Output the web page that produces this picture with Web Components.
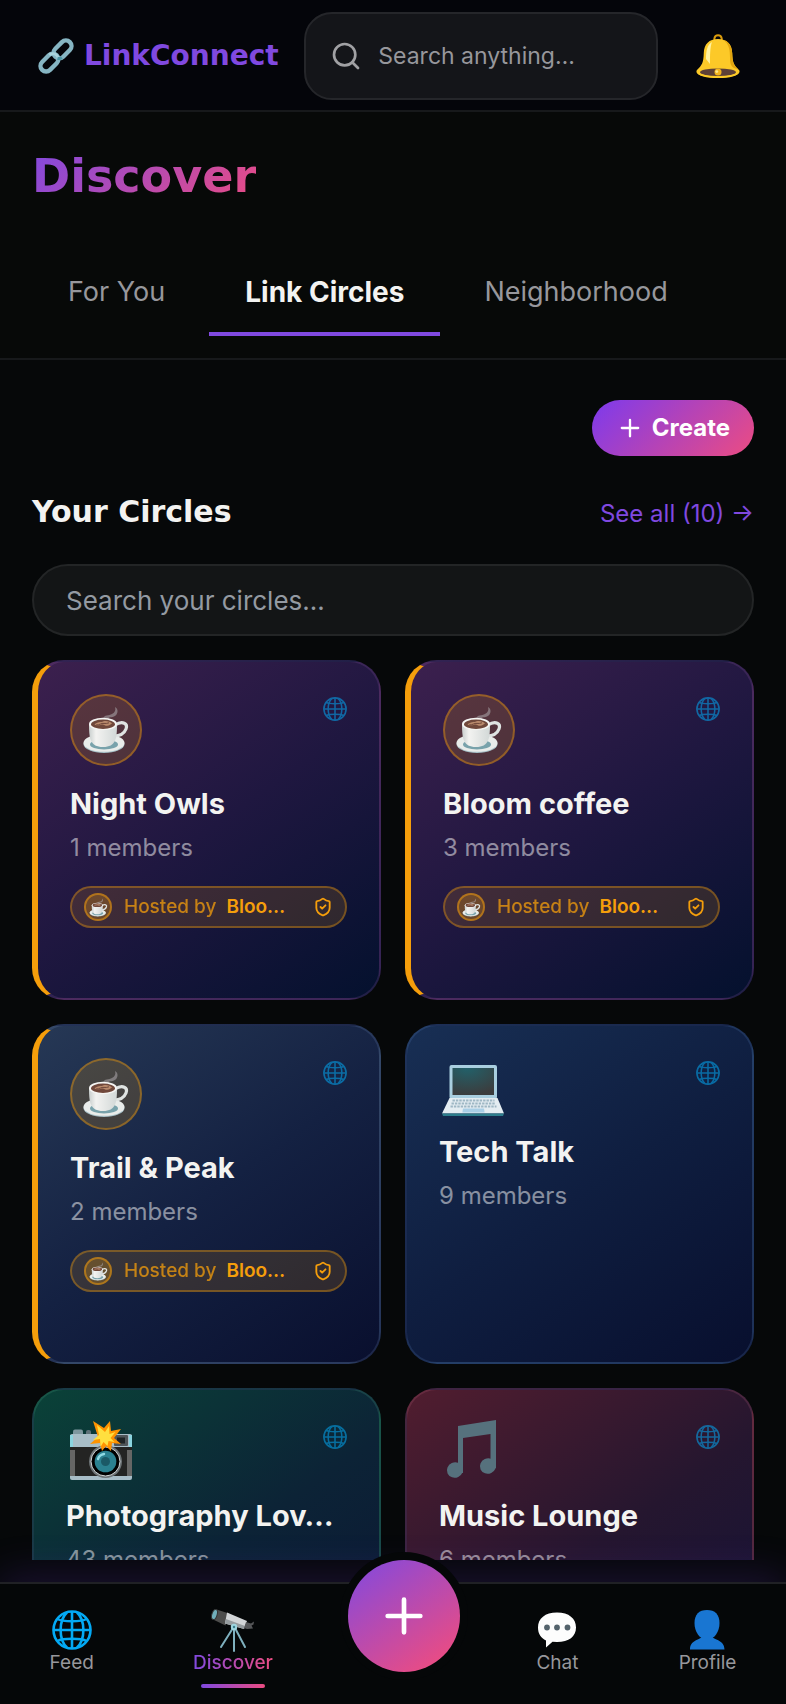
<!DOCTYPE html>
<html lang="en">
<head>
<meta charset="utf-8">
<meta name="viewport" content="width=device-width, initial-scale=1">
<title>LinkConnect - Discover</title>
<style>
  :root {
    --bg: #060809;
    --nav-bg: #050708;
    --line: #17191b;
    --violet: #8049e0;
    --pink: #ec4c82;
    --amber: #f59e0b;
    --text: #f3f3f1;
    --muted: #97979c;
    --display: "DejaVu Sans", sans-serif;
    --grad: linear-gradient(135deg, #7c3aed, #ec4c82);
  }
  html, body { height: 100%; }
  body {
    margin: 0;
    background: var(--bg);
    color: var(--text);
    font-family: "Inter", "Liberation Sans", sans-serif;
  }
</style>
</head>
<body>
<link-app></link-app>

<script>
// ---------- icons ----------
const ICONS = {
  link: ['0 0 36 36', `
    <g fill="none" stroke-width="4.4" transform="rotate(-45 18 18)">
      <rect x="-1.6" y="12.4" width="20.6" height="11.2" rx="5.6" stroke="#86b5c3"/>
      <rect x="17" y="12.4" width="20.6" height="11.2" rx="5.6" stroke="#86b5c3"/>
      <path d="M14 12.4a5.6 5.6 0 0 1 5 5.6 5.6 5.6 0 0 1-2 4.4" stroke="#a9d3dc" stroke-width="3"/>
      <path d="M17.4 20.6a5.6 5.6 0 0 0 3.6 2.8" stroke="#4d96a6" stroke-width="3"/>
    </g>`],
  search: ['0 0 24 24', `<g fill="none" stroke="#a1a1a4" stroke-width="2" stroke-linecap="round"><circle cx="11" cy="11" r="8"/><path d="m21 21-4.3-4.3"/></g>`],
  bell: ['0 0 44 44', `
    <path d="M18.4 6.6V4.4a3.7 3.7 0 0 1 7.3 0v2.2" fill="none" stroke="#d99a0c" stroke-width="2"/>
    <path d="M22 5C13 5 8.2 10 7.8 19 7.4 29 6 31 1 36c-2 2.600 1 7.500 21 7.500S45 38.600 43 36c-5-5-6.400-7-6.800-17C35.800 10 31 5 22 5z" fill="#fcc928"/>
    <path d="M27 6c6 3 7 10 7 18 0 6 1 8 4 10l4.500 1.500C37 31 36.600 28 36.200 19 35.800 11 32 7 27 6z" fill="#e2a50f"/>
    <path d="M16 8c-5 3-6 9-6 17l4 5c0-8 0-17 2-22z" fill="#fff2a0"/>
    <ellipse cx="22" cy="38.300" rx="18" ry="3.800" fill="#5d4037"/>
    <circle cx="22" cy="38" r="3.500" fill="#f3b31c"/><circle cx="20.800" cy="37.600" r="1.400" fill="#ffe88a"/>
    <path d="M1.500 38c3 7 38 7 41 0" fill="none" stroke="#fcc928" stroke-width="1.600"/>`],
  plus: ['0 0 24 24', `<path d="M12 5v14M5 12h14" fill="none" stroke="currentColor" stroke-width="2" stroke-linecap="round"/>`],
  globe: ['0 0 40 40', `
    <g fill="none" stroke="#03a9f4" stroke-width="2.600">
      <circle cx="20" cy="20" r="18.500"/><path d="M20 1v38M1 20h38"/>
      <path d="M15 2.500C6.500 10 6.500 30 15 37.500M25 2.500C33.500 10 33.500 30 25 37.500"/>
      <path d="M5.500 9c5 3 24 3 29 0M5.500 31c5-3 24-3 29 0"/>
    </g>`],
  coffee: ['0 0 48 48', `
    <defs><linearGradient id="cup"><stop offset="0" stop-color="#c9cfce"/><stop offset=".25" stop-color="#f3f3f1"/><stop offset="1" stop-color="#d2d8d7"/></linearGradient></defs>
    <path d="M21 13c1-5 6-3 9-5 3-1.500 4-4 3-7 4 2 3 8-1 9.500-4 1.500-6 0-6 4z" fill="#a6a2a5" opacity=".6"/>
    <ellipse cx="22" cy="38" rx="20.500" ry="9" fill="#a5bfc6"/>
    <ellipse cx="22" cy="37" rx="20.500" ry="8.800" fill="#e9ecea"/>
    <ellipse cx="22" cy="38.500" rx="14" ry="5" fill="#78a2ab"/>
    <path d="M33 19c8-5 13-1 11 4s-7 7-12 7" fill="none" stroke="#dfe3e2" stroke-width="3.200"/>
    <path d="M7 18c0 14 1 23 14 23s14-9 14-23z" fill="url(#cup)"/>
    <ellipse cx="21" cy="18" rx="14" ry="6.200" fill="#f5f5f3"/>
    <ellipse cx="21" cy="18.200" rx="12" ry="4.700" fill="#70483b"/>
    <path d="M12.500 18.500c3-3 6-2 9-3.300 3-.8 7 .3 8.500 2.300-2 1-3 2.800-6 2.200-2-.4-2-2-5-1-2.500.8-4 1-6.500-.2z" fill="#b98a6c"/>
    <path d="M14 19c4 0 5-2 8-1.600 2 .3 3 0 5-.6" fill="none" stroke="#70483b" stroke-width="1"/>`],
  shield: ['0 0 24 24', `<g fill="none" stroke="#f59e0b" stroke-width="2.200" stroke-linecap="round" stroke-linejoin="round"><path d="M20 13c0 5-3.500 7.500-7.660 8.950a1 1 0 0 1-.67-.01C7.500 20.500 4 18 4 13V6a1 1 0 0 1 1-1c2 0 4.500-1.200 6.240-2.720a1.170 1.170 0 0 1 1.520 0C14.510 3.810 17 5 19 5a1 1 0 0 1 1 1z"/><path d="m9 12 2 2 4-4"/></g>`],
  laptop: ['0 0 70 64', `
    <defs><radialGradient id="scr" cx=".35" cy="0" r="1"><stop offset="0" stop-color="#22616a"/><stop offset="1" stop-color="#3b3d3e"/></radialGradient></defs>
    <rect x="10.500" y="7" width="47.500" height="34" rx="2" fill="#a9cfe0"/>
    <rect x="13.500" y="10" width="41.500" height="27" fill="url(#scr)"/>
    <path d="M10.500 40h48L65 55.500H3z" fill="#e4edf2"/>
    <path d="M3 55.500h62L64 58H4z" fill="#2d7d8c"/>
    <path d="M13.500 42.500h42M12.500 45.500h44M11.500 48.500h46" stroke="#9eb7c4" stroke-width="2" stroke-dasharray="2.400 1"/>
    <path d="M24 50.500h21l.6 4H23.400z" fill="#a9cfe6"/>`],
  camera: ['0 0 70 64', `
    <rect x="7" y="7.500" width="10" height="8" rx="2" fill="#7e979f"/><rect x="20" y="8" width="5" height="6" rx="2" fill="#5f727a"/>
    <rect x="4" y="12" width="62" height="46" rx="2" fill="#a8bdc7"/>
    <path d="M4 13h3v12H4zM63 13h3v12h-3z" fill="#8bd4df"/>
    <rect x="4" y="25" width="62" height="29" fill="#242423"/>
    <path d="M4 28h5v26H4zM61 28h5v26h-5z" fill="#666665"/>
    <rect x="48" y="13" width="14" height="11" rx="1" fill="#50565a"/><rect x="51" y="15.500" width="8" height="6" fill="#1f2426"/>
    <circle cx="39.500" cy="39.500" r="16.500" fill="#6d7376"/><circle cx="39.500" cy="39.500" r="14.500" fill="#000" stroke="#d5dadc" stroke-width="1"/>
    <circle cx="39.500" cy="39.500" r="10.800" fill="#2b8190"/><circle cx="39.500" cy="39.500" r="4.500" fill="#1b5966"/>
    <path d="M32 37c1-3 3-4.500 6-5" fill="none" stroke="#8fdae4" stroke-width="2.400" stroke-linecap="round"/>
    <path d="m27-1 11 7 6-7 1 10 10-2-7 9 7 6-9-1-1 8-5-5-4 5-2-8-10 1 8-7z" fill="#ff9300"/>
    <path d="m31 3 8 7 4-6 .5 8 6-2-5 6 4 4-6-1-1 5-4-4-3 5-.5-8-7 1 6-5z" fill="#ffdf3f"/>`],
  music: ['0 0 70 64', `
    <path d="M19 4 57-2V46H51.500V12L24 16V51H19z" fill="#56717d"/>
    <ellipse cx="16" cy="48" rx="8.200" ry="7.600" transform="rotate(-25 16 48)" fill="#56717d"/>
    <ellipse cx="49" cy="44" rx="8.200" ry="7.600" transform="rotate(-25 49 44)" fill="#56717d"/>`],
  telescope: ['0 0 44 44', `
    <g stroke="#7fb0be" stroke-width="2" stroke-linecap="round"><path d="M22 20 10 39M23 20v23M24 20l10 19"/></g>
    <path d="m4 1 14 4.500-3.500 12L1 11z" fill="#4d4d4c"/>
    <path d="m16 4.500 20 8.500-3 8-19-5.500z" fill="#d2d5d7"/>
    <path d="m15 11 19 7-1 3-19-5.500z" fill="#969c9f"/>
    <path d="m35 14 5 1.500 3-2-.5 3-2 1 1.500 3-6 .5-3-1z" fill="#555658"/>
    <ellipse cx="3.500" cy="6.500" rx="2.600" ry="5.200" transform="rotate(18 3.500 6.500)" fill="#70aeba" stroke="#333" stroke-width="1"/>
    <circle cx="23" cy="19" r="3.200" fill="#9fd5df"/><circle cx="23" cy="19" r="1.200" fill="#397f8d"/>`],
  chat: ['0 0 44 44', `
    <path d="M22 4.500c12 0 19 6 19 15s-7 14.500-19 14.500l-4.500-.3L11 39.500V32.500C6 30 3 26 3 19.500 3 10.500 10 4.500 22 4.500z" fill="#fdfdfd"/>
    <g fill="#54636c"><circle cx="12" cy="19.500" r="2.900"/><circle cx="22" cy="19.500" r="2.900"/><circle cx="32.500" cy="19.500" r="2.900"/></g>`],
  person: ['0 0 44 44', `
    <path d="M22 2c8 0 12.500 4.500 12.500 13S30 31 22 32C14 31 9.500 23.500 9.500 15S14 2 22 2z" fill="#1976d2"/>
    <path d="M17 28c0 4-12 3-12 13.500h34.500C39.500 31 27 32 27 28z" fill="#1976d2"/>`]
};

class LinkIcon extends HTMLElement {
  connectedCallback() {
    const [box, body] = ICONS[this.getAttribute('name')];
    this.attachShadow({ mode: 'open' }).innerHTML = `
      <style>
        :host { display: block; flex: none; }
        svg { display: block; width: 100%; height: 100%; overflow: visible; }
      </style>
      <svg viewBox="${box}" aria-hidden="true">${body}</svg>
    `;
  }
}
customElements.define('link-icon', LinkIcon);

// ---------- top bar ----------
class LinkHeader extends HTMLElement {
  connectedCallback() {
    this.attachShadow({ mode: 'open' }).innerHTML = `
      <style>
        :host { display: block; flex: none; }
        header {
          display: flex;
          align-items: center;
          padding: 12px 24px 10px 38px;
          background: #04050a;
          border-bottom: 2px solid var(--line);
        }
        .logo {
          flex: 1;
          display: flex;
          align-items: center;
          gap: 10px;
          color: var(--violet);
          font: bold 28px/32px var(--display);
          text-decoration: none;
        }
        .logo link-icon { width: 36px; height: 36px; }
        .search {
          box-sizing: border-box;
          width: 45vw;
          height: 88px;
          display: flex;
          align-items: center;
          gap: 16px;
          padding: 0 24px;
          border: 2px solid #25262a;
          border-radius: 28px;
          background: #141519;
        }
        .search link-icon { width: 32px; height: 32px; }
        input {
          flex: 1;
          min-width: 0;
          padding: 0;
          border: 0;
          outline: 0;
          background: none;
          color: var(--text);
          font: 23px/32px "Inter", sans-serif;
        }
        input::placeholder { color: var(--muted); opacity: 1; }
        button {
          width: 88px;
          height: 88px;
          margin-left: 16px;
          padding: 0;
          border: 0;
          background: none;
          display: grid;
          place-items: center;
        }
        button link-icon { width: 44px; height: 44px; }
      </style>
      <header>
        <a class="logo" href="#home"><link-icon name="link"></link-icon>LinkConnect</a>
        <label class="search">
          <link-icon name="search"></link-icon>
          <input type="text" placeholder="Search anything…" aria-label="Search anything">
        </label>
        <button type="button" aria-label="Notifications"><link-icon name="bell"></link-icon></button>
      </header>
    `;
  }
}
customElements.define('link-header', LinkHeader);

// ---------- page title + tabs ----------
class DiscoverTabs extends HTMLElement {
  connectedCallback() {
    this.attachShadow({ mode: 'open' }).innerHTML = `
      <style>
        :host {
          display: block;
          flex: none;
          padding: 32px 32px 22px;
          background: #070908;
          border-bottom: 2px solid var(--line);
        }
        h1 {
          width: fit-content;
          margin: 0 0 40px;
          font: bold 46px/64px var(--display);
          background: linear-gradient(135deg, var(--violet), var(--pink));
          -webkit-background-clip: text;
          background-clip: text;
          color: transparent;
        }
        .tabs { display: flex; gap: 8px; }
        button {
          height: 88px;
          padding: 4px 36px 0;
          border: 0;
          border-bottom: 4px solid transparent;
          background: none;
          color: var(--muted);
          font: 400 27px/32px "Inter", sans-serif;
          white-space: nowrap;
        }
        button[aria-selected="true"] {
          color: var(--text);
          font-size: 28px;
          font-weight: 700;
          border-bottom-color: var(--violet);
        }
      </style>
      <h1>Discover</h1>
      <div class="tabs" role="tablist">
        <button type="button" role="tab" aria-selected="false">For You</button>
        <button type="button" role="tab" aria-selected="true">Link Circles</button>
        <button type="button" role="tab" aria-selected="false">Neighborhood</button>
      </div>
    `;
    const tabs = this.shadowRoot.querySelectorAll('button');
    tabs.forEach(tab => {
      tab.addEventListener('click', () => {
        tabs.forEach(t => t.setAttribute('aria-selected', t === tab));
      });
    });
  }
}
customElements.define('discover-tabs', DiscoverTabs);

// ---------- one circle ----------
class CircleCard extends HTMLElement {
  connectedCallback() {
    const hosted = this.hasAttribute('host-name');
    const icon = this.getAttribute('icon');
    this.attachShadow({ mode: 'open' }).innerHTML = `
      <style>
        :host {
          box-sizing: border-box;
          display: block;
          min-width: 0;
          padding: 32px;
          position: relative;
          border: 2px solid var(--edge);
          border-radius: 32px;
          background: linear-gradient(145deg, var(--from), var(--mid) 50%, var(--to));
        }
        :host([host-name]) { border-left: 6px solid var(--amber); }
        .avatar {
          box-sizing: border-box;
          width: 72px;
          height: 72px;
          margin-bottom: 20px;
          display: grid;
          place-items: center;
          border: 2px solid rgba(245, 158, 11, .4);
          border-radius: 50%;
          background: rgba(245, 158, 11, .18);
        }
        .avatar link-icon { width: 48px; height: 48px; }
        .emoji { width: 70px; height: 64px; margin-bottom: 12px; }
        /* sits in the corner, over the body */
        .public { position: absolute; top: 35px; right: 32px; width: 24px; height: 24px; opacity: .55; }
        h3 {
          margin: 0 0 10px;
          font-size: 29px;
          line-height: 36px;
          font-weight: 700;
          white-space: nowrap;
        }
        p { margin: 0 0 22px; color: rgba(255, 255, 255, .5); font-size: 24px; line-height: 32px; }
        .host {
          box-sizing: border-box;
          height: 42px;
          display: flex;
          align-items: center;
          padding: 0 12px;
          border: 2px solid rgba(245, 158, 11, .36);
          border-radius: 21px;
          background: rgba(245, 158, 11, .15);
          color: var(--amber);
          font-size: 19px;
          line-height: 24px;
          font-weight: 600;
          white-space: nowrap;
        }
        .dot {
          box-sizing: border-box;
          width: 28px;
          height: 28px;
          margin-right: 12px;
          display: grid;
          place-items: center;
          border: 2px solid rgba(245, 158, 11, .5);
          border-radius: 50%;
          background: rgba(245, 158, 11, .25);
        }
        .dot link-icon { width: 19px; height: 19px; }
        .by { margin-right: 10px; font-weight: 500; opacity: .75; }
        .check { width: 20px; height: 20px; margin-left: auto; }
      </style>
      ${hosted
        ? `<div class="avatar"><link-icon name="${icon}"></link-icon></div>`
        : `<link-icon class="emoji" name="${icon}"></link-icon>`}
      <h3><slot></slot></h3>
      <p>${this.getAttribute('members')} members</p>
      ${hosted ? `
      <div class="host">
        <span class="dot"><link-icon name="${icon}"></link-icon></span>
        <span class="by">Hosted by</span>
        <span>${this.getAttribute('host-name')}</span>
        <link-icon class="check" name="shield"></link-icon>
      </div>` : ''}
      <link-icon class="public" name="globe"></link-icon>
    `;
  }
}
customElements.define('circle-card', CircleCard);

// ---------- Your Circles ----------
class YourCircles extends HTMLElement {
  connectedCallback() {
    this.attachShadow({ mode: 'open' }).innerHTML = `
      <style>
        :host { display: block; padding: 40px 32px; }
        .create {
          height: 56px;
          margin: 0 0 0 auto;
          display: flex;
          align-items: center;
          gap: 8px;
          padding: 0 24px;
          border: 0;
          border-radius: 28px;
          background: var(--grad);
          color: #fff;
          font: 700 24px/28px "Inter", sans-serif;
        }
        .create link-icon { width: 28px; height: 28px; }
        .head {
          display: flex;
          align-items: flex-end;
          justify-content: space-between;
          margin: 36px 0 32px;
        }
        h2 { margin: 0; font: bold 30px/40px var(--display); }
        .head a { color: var(--violet); font-size: 24px; line-height: 36px; text-decoration: none; }
        input {
          box-sizing: border-box;
          display: block;
          width: 100%;
          height: 72px;
          margin-bottom: 24px;
          padding: 0 32px;
          border: 2px solid #232526;
          border-radius: 36px;
          outline: 0;
          background: #131516;
          color: var(--text);
          font: 26px/32px "Inter", sans-serif;
        }
        input::placeholder { color: #949aa2; opacity: 1; }
        .grid {
          display: grid;
          grid-template-columns: repeat(2, minmax(0, 1fr));
          grid-auto-rows: 340px;
          gap: 24px;
        }
        .plum { --from: #3c204e; --mid: #1f1740; --to: #04112e; --edge: rgba(150, 90, 170, .2); }
        .slate { --from: #263855; --mid: #142142; --to: #090f2e; --edge: rgba(120, 150, 200, .18); }
        .navy { --from: #182f54; --mid: #0f1e40; --to: #080f2e; --edge: rgba(90, 130, 190, .2); }
        .green { --from: #0a4238; --mid: #0c2336; --to: #0b1433; --edge: rgba(80, 170, 140, .2); }
        .wine { --from: #511d2f; --mid: #25162f; --to: #101238; --edge: rgba(190, 100, 130, .2); }
      </style>
      <button class="create" type="button"><link-icon name="plus"></link-icon>Create</button>
      <div class="head">
        <h2>Your Circles</h2>
        <a href="#circles">See all (10) →</a>
      </div>
      <input type="text" placeholder="Search your circles…" aria-label="Search your circles">
      <div class="grid">
        <circle-card class="plum" icon="coffee" members="1" host-name="Bloo…">Night Owls</circle-card>
        <circle-card class="plum" icon="coffee" members="3" host-name="Bloo…">Bloom coffee</circle-card>
        <circle-card class="slate" icon="coffee" members="2" host-name="Bloo…">Trail &amp; Peak</circle-card>
        <circle-card class="navy" icon="laptop" members="9">Tech Talk</circle-card>
        <circle-card class="green" icon="camera" members="43">Photography Lov…</circle-card>
        <circle-card class="wine" icon="music" members="6">Music Lounge</circle-card>
      </div>
    `;
  }
}
customElements.define('your-circles', YourCircles);

// ---------- bottom navigation ----------
class BottomNav extends HTMLElement {
  connectedCallback() {
    this.attachShadow({ mode: 'open' }).innerHTML = `
      <style>
        :host { display: block; flex: none; position: relative; z-index: 1; margin-top: 22px; }
        nav {
          display: flex;
          justify-content: space-around;
          align-items: flex-start;
          height: 120px;
          background: var(--nav-bg);
          border-top: 2px solid #202125;
          box-shadow: 0 -8px 40px rgba(124, 58, 237, .17);
        }
        a {
          display: flex;
          flex-direction: column;
          align-items: center;
          padding: 24px 24px 0;
          color: var(--muted);
          font-size: 19px;
          line-height: 22px;
          text-decoration: none;
        }
        a link-icon { width: 44px; height: 44px; }
        a .globe { width: 40px; height: 40px; margin: 2px 0; }
        a span { padding-bottom: 10px; }
        .active span {
          font-weight: 500;
          background: linear-gradient(90deg, var(--violet), var(--pink));
          -webkit-background-clip: text;
          background-clip: text;
          color: transparent;
        }
        .active::after {
          content: '';
          width: 64px;
          height: 4px;
          border-radius: 2px;
          background: linear-gradient(90deg, var(--violet), var(--pink));
        }
        button {
          width: 112px;
          height: 112px;
          margin-top: -24px;
          padding: 0;
          border: 0;
          border-radius: 50%;
          display: grid;
          place-items: center;
          background: linear-gradient(145deg, var(--violet), var(--pink) 90%);
          box-shadow: 0 0 0 8px var(--nav-bg);
          color: #fff;
        }
        button link-icon { width: 56px; height: 56px; }
      </style>
      <nav>
        <a href="#feed"><link-icon class="globe" name="globe"></link-icon><span>Feed</span></a>
        <a class="active" href="#discover" aria-current="page"><link-icon name="telescope"></link-icon><span>Discover</span></a>
        <button type="button" aria-label="New post"><link-icon name="plus"></link-icon></button>
        <a href="#chat"><link-icon name="chat"></link-icon><span>Chat</span></a>
        <a href="#profile"><link-icon name="person"></link-icon><span>Profile</span></a>
      </nav>
    `;
  }
}
customElements.define('bottom-nav', BottomNav);

class LinkApp extends HTMLElement {
  connectedCallback() {
    this.attachShadow({ mode: 'open' }).innerHTML = `
      <style>
        :host { display: flex; flex-direction: column; height: 100vh; overflow: hidden; }
        main { flex: 1; min-height: 0; overflow: hidden; }
      </style>
      <link-header></link-header>
      <main>
        <discover-tabs></discover-tabs>
        <your-circles></your-circles>
      </main>
      <bottom-nav></bottom-nav>
    `;
  }
}
customElements.define('link-app', LinkApp);
</script>
</body>
</html>
